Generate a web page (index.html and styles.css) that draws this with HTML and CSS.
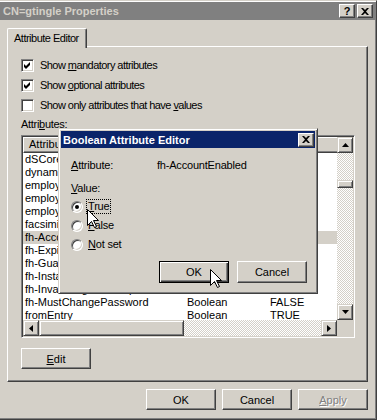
FILE: index.html
```html
<!DOCTYPE html>
<html>
<head>
<meta charset="utf-8">
<title>CN=gtingle Properties</title>
<link rel="stylesheet" href="styles.css">
</head>
<body>
<div class="window">
  <div class="titlebar">
    <span class="title">CN=gtingle Properties</span>
    <div class="tbtns">
      <span class="tbtn q">?</span>
      <span class="tbtn"><svg width="8" height="7" viewBox="0 0 8 7"><path d="M0 0H2L4 2L6 0H8L5 3.5L8 7H6L4 5L2 7H0L3 3.5Z" fill="#000"/></svg></span>
    </div>
  </div>
  <div class="client">
    <div class="tabs"><div class="tab">Attribute Editor</div></div>
    <div class="panel">
      <div class="check"><span class="cb"><svg width="7" height="7" viewBox="0 0 7 7"><polygon points="0,2 2,4 6,0 6,3 2,7 0,5" fill="#000"/></svg></span><span class="ctext">Show <u>m</u>andatory attributes</span></div>
      <div class="check"><span class="cb"><svg width="7" height="7" viewBox="0 0 7 7"><polygon points="0,2 2,4 6,0 6,3 2,7 0,5" fill="#000"/></svg></span><span class="ctext">Show <u>o</u>ptional attributes</span></div>
      <div class="check"><span class="cb"></span><span class="ctext">Show only attributes that have <u>v</u>alues</span></div>
      <div class="lbl">Attri<u>b</u>utes:</div>
      <div class="listbox">
        <div class="lv">
          <div class="hdr"><div class="hc h1">Attribute</div><div class="hc h2"></div><div class="hc h3"></div></div>
          <div class="row"><span class="c1">dSCorePropagationData</span></div>
          <div class="row"><span class="c1">dynamicLDAPServer</span></div>
          <div class="row"><span class="c1">employeeID</span></div>
          <div class="row"><span class="c1">employeeNumber</span></div>
          <div class="row"><span class="c1">employeeType</span></div>
          <div class="row"><span class="c1">facsimileTelephoneNumber</span></div>
          <div class="row sel"><span class="c1">fh-AccountEnabled</span></div>
          <div class="row"><span class="c1">fh-ExpirationDate</span></div>
          <div class="row"><span class="c1">fh-GuardianEmail</span></div>
          <div class="row"><span class="c1">fh-InstallDate</span></div>
          <div class="row"><span class="c1">fh-InvalidLogonAttempts</span></div>
          <div class="row"><span class="c1">fh-MustChangePassword</span><span class="c2">Boolean</span><span class="c3">FALSE</span></div>
          <div class="row"><span class="c1">fromEntry</span><span class="c2">Boolean</span><span class="c3">TRUE</span></div>
        </div>
        <div class="vs">
          <div class="sbtn"><svg width="7" height="4" viewBox="0 0 7 4"><polygon points="3.5,0 7,4 0,4" fill="#000"/></svg></div>
          <div class="vtrack"><div class="vthumb"></div></div>
          <div class="sbtn"><svg width="7" height="4" viewBox="0 0 7 4"><polygon points="0,0 7,0 3.5,4" fill="#000"/></svg></div>
        </div>
        <div class="hs">
          <div class="sbtn"><svg width="4" height="7" viewBox="0 0 4 7"><polygon points="0,3.5 4,0 4,7" fill="#000"/></svg></div>
          <div class="hthumb"></div>
          <div class="htrack"></div>
          <div class="sbtn"><svg width="4" height="7" viewBox="0 0 4 7"><polygon points="0,0 4,3.5 0,7" fill="#000"/></svg></div>
        </div>
        <div class="corner"></div>
      </div>
      <div class="btn edit"><span><u>E</u>dit</span></div>
    </div>
    <div class="footer">
      <div class="btn">OK</div>
      <div class="btn">Cancel</div>
      <div class="btn disabled"><span><u>A</u>pply</span></div>
    </div>
  </div>

  <div class="dialog">
    <div class="dtitle">
      <span>Boolean Attribute Editor</span>
      <span class="tbtn"><svg width="8" height="7" viewBox="0 0 8 7"><path d="M0 0H2L4 2L6 0H8L5 3.5L8 7H6L4 5L2 7H0L3 3.5Z" fill="#000"/></svg></span>
    </div>
    <div class="dbody">
      <div class="attr-line"><span class="k"><u>A</u>ttribute:</span><span>fh-AccountEnabled</span></div>
      <div class="vlbl"><u>V</u>alue:</div>
      <div class="radios">
        <div class="radio"><span class="rb on"></span><span class="rtext focus"><u>T</u>rue</span></div>
        <div class="radio"><span class="rb"></span><span class="rtext"><u>F</u>alse</span></div>
        <div class="radio"><span class="rb"></span><span class="rtext"><u>N</u>ot set</span></div>
      </div>
      <div class="dbtns">
        <div class="btn def">OK</div>
        <div class="btn">Cancel</div>
      </div>
    </div>
  </div>

  <svg class="cursor cur1" width="12" height="20" viewBox="0 0 12 20"><path d="M0.5 0.5V16.5L4.5 12.5L7.5 18.5L9.5 17.5L6.5 11.5H11.5Z" fill="#fff" stroke="#000" stroke-width="1"/></svg>
  <svg class="cursor cur2" width="12" height="20" viewBox="0 0 12 20"><path d="M0.5 0.5V16.5L4.5 12.5L7.5 18.5L9.5 17.5L6.5 11.5H11.5Z" fill="#fff" stroke="#000" stroke-width="1"/></svg>
</div>
</body>
</html>
```

FILE: styles.css
```css
* { box-sizing: border-box; }
html, body { margin: 0; padding: 0; }
body {
  width: 377px;
  height: 420px;
  overflow: hidden;
  background: #d4d0c8;
  font: 11px "Liberation Sans", Arial, sans-serif;
  color: #000;
}
u { text-decoration: underline; text-underline-offset: 1px; }

.window {
  position: relative;
  width: 377px;
  height: 420px;
  background: #d4d0c8;
  border-top: 1px solid #d4d0c8;
  border-right: 1px solid #404040;
  border-bottom: 1px solid #404040;
  box-shadow: inset 0 1px #fff, inset -1px -1px #808080;
  padding: 1px 1px 2px 0;
}

.titlebar {
  height: 18px;
  background: #808080;
  color: #d4d0c8;
  font-weight: bold;
  display: flex;
  align-items: center;
  justify-content: space-between;
  padding: 0 2px 0 3px;
}
.tbtns { display: flex; gap: 2px; }
.tbtn {
  width: 16px;
  height: 14px;
  background: #d4d0c8;
  border: 1px solid;
  border-color: #fff #404040 #404040 #fff;
  box-shadow: inset -1px -1px #808080;
  display: flex;
  align-items: center;
  justify-content: center;
  color: #000;
  font-weight: bold;
  font-size: 11px;
  line-height: 12px;
}
.tbtn.q { padding-bottom: 1px; }

.client { padding: 0 7px 0 7px; }
.tabs { margin-top: 8px; height: 18px; display: flex; position: relative; z-index: 1; }
.tab {
  width: 80px;
  height: 20px;
  border: 1px solid;
  border-bottom: none;
  border-color: #fff #404040 #404040 #fff;
  box-shadow: inset -1px 0 #808080;
  border-radius: 2px 2px 0 0;
  background: #d4d0c8;
  padding: 3px 0 0 6px;
  letter-spacing: -0.5px;
  line-height: 13px;
}

.panel {
  height: 336px;
  border: 1px solid;
  border-color: #fff #404040 #404040 #fff;
  box-shadow: inset -1px -1px #808080;
  padding: 8px 12px 0 13px;
}
.check { height: 20px; display: flex; align-items: center; gap: 6px; }
.cb {
  width: 13px;
  height: 13px;
  background: #fff;
  border: 1px solid;
  border-color: #808080 #fff #fff #808080;
  box-shadow: inset 1px 1px #404040, inset -1px -1px #d4d0c8;
  display: flex;
  align-items: center;
  justify-content: center;
  flex: none;
}
.ctext { letter-spacing: -0.55px; }
.lbl { margin-top: 2px; line-height: 14px; letter-spacing: -0.3px; }

.listbox {
  margin-top: 4px;
  width: 334px;
  height: 203px;
  background: #fff;
  border: 1px solid;
  border-color: #808080 #fff #fff #808080;
  box-shadow: inset 1px 1px #404040, inset -1px -1px #d4d0c8;
  padding: 1px;
  display: grid;
  grid-template-columns: 314px 16px;
  grid-template-rows: 183px 16px;
}
.lv { overflow: hidden; background: #fff; }
.hdr { display: flex; height: 16px; }
.hc {
  flex: none;
  height: 16px;
  background: #d4d0c8;
  border: 1px solid;
  border-color: #fff #404040 #404040 #fff;
  box-shadow: inset -1px -1px #808080;
  padding-left: 5px;
  line-height: 13px;
  white-space: nowrap;
}
.h1 { width: 161px; }
.h2 { width: 82px; }
.h3 { width: 200px; }
.row { display: flex; height: 13px; line-height: 13px; white-space: nowrap; }
.row.sel { background: #d4d0c8; }
.row span { flex: none; }
.c1 { width: 161px; padding-left: 2px; }
.c2 { width: 82px; padding-left: 3px; }
.c3 { padding-left: 4px; }

.sbtn {
  width: 16px;
  height: 16px;
  flex: none;
  background: #d4d0c8;
  border: 1px solid;
  border-color: #d4d0c8 #404040 #404040 #d4d0c8;
  box-shadow: inset 1px 1px #fff, inset -1px -1px #808080;
  display: flex;
  align-items: center;
  justify-content: center;
}
.vs, .hs { display: flex; background: repeating-conic-gradient(#fff 0 25%, #d4d0c8 0 50%) 0 0 / 2px 2px; }
.vs { flex-direction: column; }
.vtrack { flex: 1; }
.vthumb, .hthumb {
  background: #d4d0c8;
  border: 1px solid;
  border-color: #d4d0c8 #404040 #404040 #d4d0c8;
  box-shadow: inset 1px 1px #fff, inset -1px -1px #808080;
}
.vthumb { margin-top: 27px; height: 8px; }
.hthumb { width: 145px; flex: none; }
.htrack { flex: 1; }
.corner { background: #d4d0c8; }

.btn {
  width: 70px;
  height: 21px;
  background: #d4d0c8;
  border: 1px solid;
  border-color: #fff #404040 #404040 #fff;
  box-shadow: inset -1px -1px #808080;
  display: flex;
  align-items: center;
  justify-content: center;
  flex: none;
}
.edit { margin-top: 10px; }
.footer { margin-top: 7px; display: flex; justify-content: flex-end; gap: 6px; }
.disabled { color: #808080; text-shadow: 1px 1px 0 #fff; }

.dialog {
  position: absolute;
  left: 58px;
  top: 127px;
  width: 260px;
  height: 166px;
  background: #d4d0c8;
  border: 1px solid;
  border-color: #d4d0c8 #404040 #404040 #d4d0c8;
  box-shadow: inset 1px 1px #fff, inset -1px -1px #808080;
  padding: 2px;
  z-index: 5;
}
.dtitle {
  height: 17px;
  background: #0a246a;
  color: #fff;
  font-weight: bold;
  display: flex;
  align-items: center;
  justify-content: space-between;
  padding: 0 1px 0 2px;
}
.dbody { padding: 10px 8px 0 10px; }
.attr-line { display: flex; line-height: 14px; letter-spacing: -0.2px; }
.attr-line .k { width: 86px; }
.vlbl { margin-top: 9px; line-height: 14px; letter-spacing: -0.2px; }
.radios { margin-top: 2px; }
.radio { height: 19px; display: flex; align-items: center; gap: 4px; }
.rb {
  width: 12px;
  height: 12px;
  border-radius: 50%;
  background: #fff;
  border: 1px solid;
  border-color: #808080 #fff #fff #808080;
  box-shadow: inset 1px 1px #404040, inset -1px -1px #d4d0c8;
  position: relative;
  flex: none;
}
.rb.on::after {
  content: "";
  position: absolute;
  left: 3px;
  top: 3px;
  width: 4px;
  height: 4px;
  border-radius: 50%;
  background: #000;
}
.rtext { padding: 0 1px; line-height: 13px; letter-spacing: -0.2px; }
.rtext.focus { outline: 1px dotted #000; }
.dbtns { margin-top: 7px; display: flex; justify-content: flex-end; gap: 8px; }
.dbtns .btn { height: 22px; }
.btn.def {
  border: 1px solid #000;
  box-shadow: inset 1px 1px #fff, inset -1px -1px #404040, inset -2px -2px #808080;
}

.cursor { position: absolute; z-index: 10; }
.cur1 { left: 87px; top: 208px; }
.cur2 { left: 210px; top: 268px; }
```
